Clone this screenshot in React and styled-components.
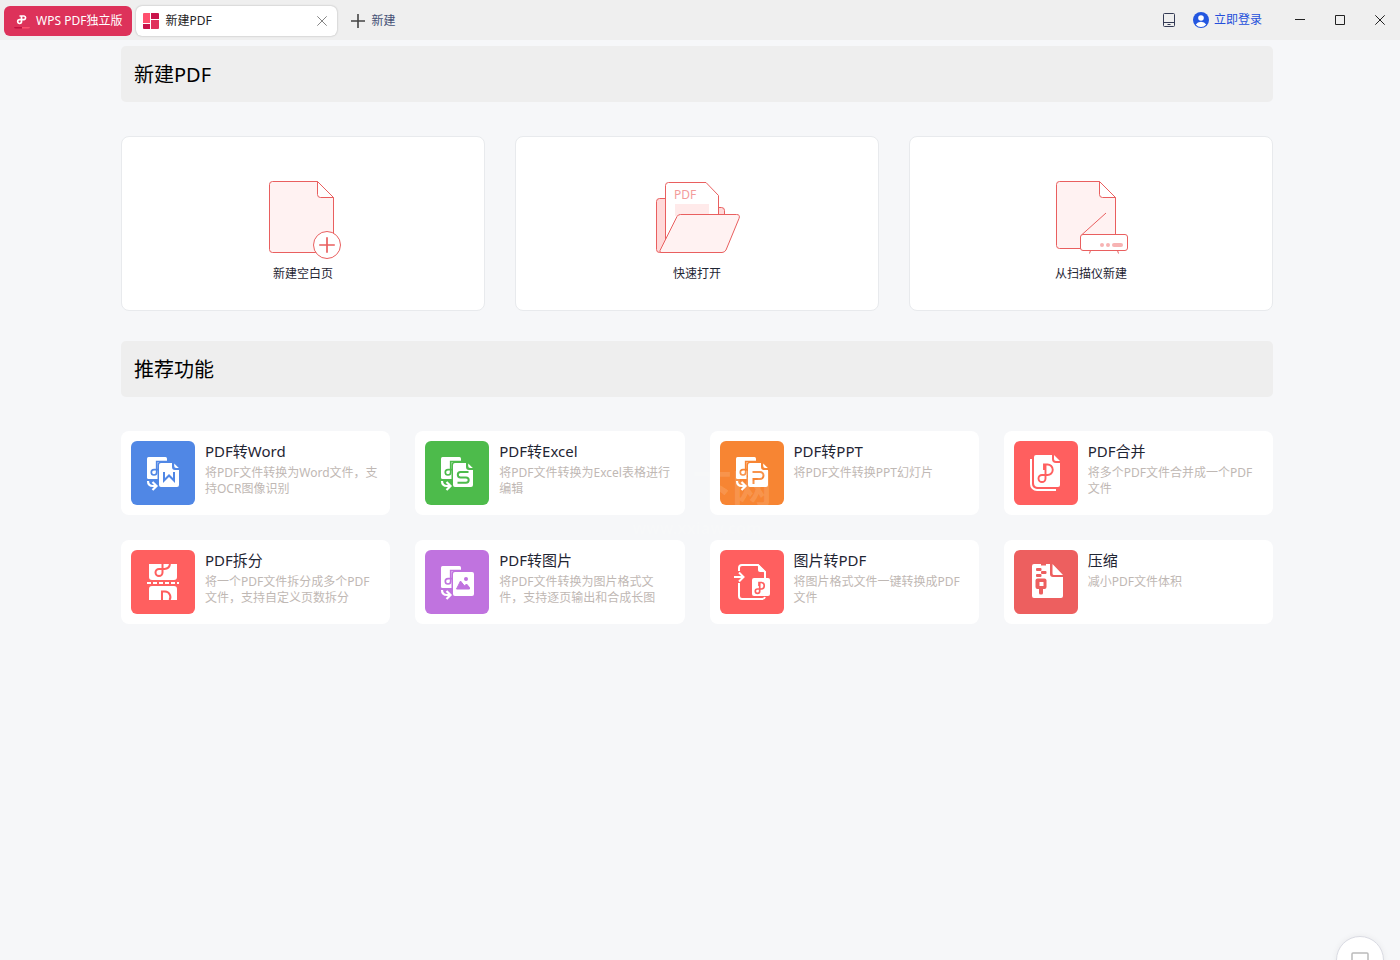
import React from 'react';
import styled, { createGlobalStyle } from 'styled-components';

const GlobalStyle = createGlobalStyle`
  * {
    box-sizing: border-box;
  }

  body {
    margin: 0;
    background-color: #f6f7f9;
    color: #1f2533;
    font-family: 'Noto Sans', 'Noto Sans CJK SC', sans-serif;
    font-size: 12px;
    line-height: 16px;
  }

  button {
    padding: 0;
    border: none;
    background: none;
    color: inherit;
    font: inherit;
    cursor: pointer;
  }

  h2, h3, p {
    margin: 0;
    font-weight: 400;
  }

  svg {
    display: block;
    flex: none;
  }
`;

const TitleBar = styled.header`
  display: flex;
  align-items: center;
  height: 40px;
  padding-left: 4px;
  background-color: #efefef;
`;

const Tabs = styled.nav`
  display: flex;
  align-items: center;
  flex: 1;
  gap: 4px;
  padding-top: 2px;
`;

const HomeTab = styled.button`
  display: flex;
  align-items: center;
  gap: 6px;
  height: 30px;
  padding: 0 10px;
  border-radius: 6px;
  background-color: #dd325a;
  color: #ffffff;
  white-space: nowrap;
`;

const ActiveTab = styled.div`
  display: flex;
  align-items: center;
  width: 201px;
  height: 30px;
  padding: 0 10px 0 7px;
  border-radius: 6px;
  background-color: #ffffff;
  box-shadow: 0 0 2px rgba(0, 0, 0, 0.3);

  span {
    flex: 1;
    margin-left: 6px;
    color: #222222;
  }
`;

const NewTab = styled.button`
  display: flex;
  align-items: center;
  gap: 6px;
  padding: 0 10px;
  color: #444f75;
`;

const Actions = styled.div`
  display: flex;
  align-items: center;
`;

const Login = styled.button`
  display: flex;
  align-items: center;
  gap: 5px;
  margin: 0 18px;
  color: #244fdb;
`;

const WindowButton = styled.button`
  display: flex;
  align-items: center;
  justify-content: center;
  width: 40px;
  height: 40px;
`;

const Page = styled.main`
  max-width: 1158px;
  margin: 0 auto;
  padding: 6px 6px 0 0;
`;

const SectionTitle = styled.h2`
  padding: 15px 13px 13px;
  border-radius: 5px;
  background-color: #eeeeee;
  color: #000000;
  font-size: 20px;
  line-height: 28px;
`;

const Starters = styled.div`
  display: grid;
  grid-template-columns: repeat(3, 1fr);
  gap: 30px;
  margin: 34px 0 30px;
`;

const Starter = styled.button`
  display: flex;
  flex-direction: column;
  align-items: center;
  gap: 1px;
  padding: 32px 0 28px;
  border: 1px solid #e8eaed;
  border-radius: 8px;
  background-color: #ffffff;
`;

const Features = styled.div`
  position: relative;
  display: grid;
  grid-template-columns: repeat(4, 1fr);
  gap: 25px;
  margin-top: 34px;
`;

const FeatureCard = styled.button`
  display: flex;
  align-items: flex-start;
  gap: 10px;
  padding: 10px;
  border-radius: 8px;
  background-color: #ffffff;
  text-align: left;

  h3 {
    margin-bottom: 4px;
    font-size: 15px;
    line-height: 20px;
  }

  p {
    color: #bfb8b4;
  }
`;

const Tile = styled.span`
  flex: none;
  border-radius: 6px;
  background-color: ${({ $color }) => $color};
  color: ${({ $color }) => $color};
`;

const Watermark = styled.div`
  position: absolute;
  top: 28px;
  left: 50%;
  width: 150px;
  transform: translateX(-50%);
  color: rgba(255, 255, 255, 0.14);
  font-size: 40px;
  font-weight: 700;
  line-height: 58px;
  text-align: right;
  pointer-events: none;

  small {
    display: block;
    font-size: 16px;
    line-height: 22px;
    text-align: center;
  }
`;

const FloatButton = styled.button`
  position: fixed;
  right: 16px;
  bottom: -24px;
  display: flex;
  justify-content: center;
  width: 48px;
  height: 48px;
  padding-top: 15px;
  border: 1px solid #d9dae2;
  border-radius: 50%;
  background-color: #ffffff;
  box-shadow: 0 0 6px rgba(0, 0, 0, 0.06);
`;

const Logo = () => (
  <svg width="16" height="16" viewBox="0 0 16 16" fill="none">
    <path d="M0 14h8v1.500H2a2 2 0 0 1-2-1.500z" fill="#c2103f" />
    <path d="M8 14h8a2 2 0 0 1-2 1.500H8z" fill="#ff4f6e" />
    <path
      d="M7.500 3v5.600a1.900 1.900 0 1 1-1.900-1.900h4.500a1.900 1.900 0 0 0 0-3.700H5.500"
      stroke="#ffffff"
      strokeWidth="1.7"
    />
  </svg>
);

const TabIcon = () => (
  <svg width="16" height="16" viewBox="0 0 16 16">
    <path d="M1 0h6v10H0V1a1 1 0 0 1 1-1z" fill="#ff4f6e" />
    <path d="M8 0h7a1 1 0 0 1 1 1v5H8z" fill="#c9134a" />
    <path d="M0 11h7v5H1a1 1 0 0 1-1-1z" fill="#c9134a" />
    <path d="M8 7h8v8a1 1 0 0 1-1 1H8z" fill="#e0315c" />
  </svg>
);

const Cross = ({ size, color }) => (
  <svg width={size} height={size} viewBox="0 0 10 10" stroke={color}>
    <path d="M0.3 0.3l9.4 9.4M9.7 0.3L0.3 9.7" />
  </svg>
);

const BlankPageIcon = () => (
  <svg width="96" height="96" viewBox="0 0 96 96" fill="#fff2f2" stroke="#e95f5f">
    <path d="M17.5 12.5h45l16 16v55h-61a3 3 0 0 1-3-3v-65a3 3 0 0 1 3-3z" />
    <path d="M62.5 12.5v13a3 3 0 0 0 3 3h13z" fill="#ffffff" />
    <circle cx="72" cy="76" r="13.5" fill="#ffffff" />
    <path d="M72 68.2v15.6M64.2 76h15.6" strokeWidth="1.7" />
  </svg>
);

const FolderIcon = () => (
  <svg width="96" height="96" viewBox="0 0 96 96" fill="#ffd9d9" stroke="#e95f5f">
    <path d="M10.5 29.5h6v9h56a3 3 0 0 1 3 3v30l-64 12h-1a3 3 0 0 1-3-3v-48a3 3 0 0 1 3-3z" />
    <path d="M16.5 71V16.5a3 3 0 0 1 3-3H57l12.5 13V60z" fill="#ffffff" />
    <path d="M26 35h34v12H26z" fill="#ffeaea" stroke="none" />
    <text x="25" y="30" fontSize="12" fill="#f39b9b" stroke="none">
      PDF
    </text>
    <path
      d="M31.5 45.5h56q4 0 2.5 4L77 81q-1.5 2.5-4 2.5H12q-1.5 0-1-2l17-34q1-2 3.5-2z"
      fill="#fff2f2"
    />
  </svg>
);

const ScannerIcon = () => (
  <svg width="96" height="96" viewBox="0 0 96 96" fill="#fff2f2" stroke="#e95f5f">
    <path d="M16.5 12.5h40l16 16v51h-56a3 3 0 0 1-3-3v-61a3 3 0 0 1 3-3z" />
    <path d="M56.5 12.5v13a3 3 0 0 0 3 3h13z" fill="#ffffff" />
    <path d="M38.5 66L63 44" />
    <path d="M47.5 81.5l-1 3M74.5 81.5l1 3" />
    <rect x="37.5" y="65.5" width="47" height="16" rx="2.5" fill="#ffffff" />
    <g fill="#f7b3b3" stroke="none">
      <circle cx="59" cy="76" r="2" />
      <circle cx="65" cy="76" r="2" />
      <rect x="69" y="74" width="11" height="4" rx="2" />
    </g>
  </svg>
);

// Back page and arrow shared by the "convert to" icons
const ConvertBase = ({ children, fold = true }) => (
  <>
    <path d="M17.5 16h17q1.500 0 1.500 1.500V38H17.500q-1.500 0-1.500-1.500v-19q0-1.500 1.500-1.500z" fill="#ffffff" />
    <path
      d="M36 20.500H25.700v10.800a2.700 2.700 0 1 1-2.700-2.700h5"
      stroke="currentColor"
      strokeWidth="1.7"
    />
    {fold ? (
      <>
        <path
          d="M30 22h11v4a3 3 0 0 0 3 3h4v15a2 2 0 0 1-2 2H30a2 2 0 0 1-2-2V24a2 2 0 0 1 2-2z"
          fill="#ffffff"
          stroke="currentColor"
          strokeWidth="3"
          paintOrder="stroke"
        />
        <path d="M43.2 22.500l4.600 4.500h-2.600a2 2 0 0 1-2-2z" fill="#ffffff" />
      </>
    ) : (
      <rect
        x="28"
        y="22"
        width="21"
        height="24"
        rx="2"
        fill="#ffffff"
        stroke="currentColor"
        strokeWidth="3"
        paintOrder="stroke"
      />
    )}
    <path d="M17 40q0 5 5 5h3M21.500 41l4 4-4 4" stroke="#ffffff" strokeWidth="2.200" />
    {children}
  </>
);

const WordIcon = () => (
  <ConvertBase>
    <path d="M33 31v8.500l5-5 5 5V31" stroke="currentColor" strokeWidth="2" />
  </ConvertBase>
);

const ExcelIcon = () => (
  <ConvertBase>
    <path
      d="M43.500 31H35.500a2.700 2.700 0 0 0 0 5.400h5.500a2.700 2.700 0 0 1 0 5.400h-8.500"
      stroke="currentColor"
      strokeWidth="2"
    />
  </ConvertBase>
);

const SlidesIcon = () => (
  <ConvertBase>
    <path
      d="M32.500 31h7.500a3.500 3.500 0 0 1 0 7h-6.500v5"
      stroke="currentColor"
      strokeWidth="2"
    />
  </ConvertBase>
);

const PictureIcon = () => (
  <ConvertBase fold={false}>
    <path
      d="M31.500 39l4-8 4 5 2-2 3 3.500V39z"
      fill="currentColor"
      stroke="currentColor"
      strokeLinejoin="round"
    />
    <circle cx="41" cy="29" r="2" fill="currentColor" />
  </ConvertBase>
);

const MergeIcon = () => (
  <>
    <path d="M17 18v25a6 6 0 0 0 6 6h19" stroke="#ffffff" strokeWidth="2" />
    <path
      d="M22 14h16v4a4 4 0 0 0 4 4h4v22a2 2 0 0 1-2 2H24a4 4 0 0 1-4-4V16a2 2 0 0 1 2-2z"
      fill="#ffffff"
    />
    <path d="M40 14l6 6h-4a2 2 0 0 1-2-2z" fill="#ffffff" />
    <path
      d="M30 29v-5.500h3.500a5.200 5.200 0 0 1 0 10.500H28a3.500 3.500 0 1 0 3.500 3.500V24"
      stroke="currentColor"
      strokeWidth="1.900"
    />
  </>
);

const SplitIcon = () => (
  <>
    <path d="M18 14h28v13a3 3 0 0 1-3 3H21a3 3 0 0 1-3-3z" fill="#ffffff" />
    <path
      d="M31.500 14v8.500a3.500 3.500 0 1 1-3.500-3.500h5.500a6 6 0 0 0 5.500-5"
      stroke="currentColor"
      strokeWidth="2"
    />
    <path d="M16 33h32" stroke="#ffffff" strokeWidth="2" strokeDasharray="4 2" />
    <path d="M21 36h22a3 3 0 0 1 3 3v11H18V39a3 3 0 0 1 3-3z" fill="#ffffff" />
    <path d="M31 50v-8.500h3a5.500 5.500 0 0 1 4.500 8.500" stroke="currentColor" strokeWidth="2" />
  </>
);

const ToPdfIcon = () => (
  <>
    <path
      d="M19 21v-3a3 3 0 0 1 3-3h16l7 7v6M19 33v13a3 3 0 0 0 3 3h20a3 3 0 0 0 3-2"
      stroke="#ffffff"
      strokeWidth="2"
    />
    <path d="M38 14l8 8h-6a2 2 0 0 1-2-2z" fill="#ffffff" />
    <path d="M14 27h9M19 22.500l4.500 4.500-4.500 4.500" stroke="#ffffff" strokeWidth="2" />
    <rect x="32" y="28" width="18" height="18" rx="2" fill="#ffffff" />
    <path
      d="M39 36v-3.500h2.500a3.300 3.300 0 0 1 0 6.500H37.500a2.200 2.200 0 1 0 2.200 2.200V33"
      stroke="currentColor"
      strokeWidth="1.700"
    />
  </>
);

const CompressIcon = () => (
  <>
    <path
      d="M20 14h16v10a3 3 0 0 0 3 3h10v19a2 2 0 0 1-2 2H20a2 2 0 0 1-2-2V16a2 2 0 0 1 2-2z"
      fill="#ffffff"
    />
    <path d="M38.500 14L49 25h-9a1.500 1.500 0 0 1-1.500-1.500z" fill="#ffffff" />
    <g fill="currentColor">
      <path d="M27 14h5v1.500h-5z" />
      <rect x="22" y="18" width="5.500" height="3" rx="1" />
      <rect x="27" y="21" width="5.500" height="3" rx="1" />
      <rect x="22" y="24" width="5.500" height="3" rx="1" />
      <rect x="21.500" y="28.500" width="11" height="10.500" rx="2" />
      <rect x="25" y="37" width="4" height="7.500" rx="1.500" />
    </g>
    <path d="M25.500 32h4v4h-4z" fill="#ffffff" />
  </>
);

const starters = [
  { label: '新建空白页', Icon: BlankPageIcon },
  { label: '快速打开', Icon: FolderIcon },
  { label: '从扫描仪新建', Icon: ScannerIcon },
];

const features = [
  {
    title: 'PDF转Word',
    text: '将PDF文件转换为Word文件，支持OCR图像识别',
    color: '#5087e5',
    Icon: WordIcon,
  },
  {
    title: 'PDF转Excel',
    text: '将PDF文件转换为Excel表格进行编辑',
    color: '#4dbb4b',
    Icon: ExcelIcon,
  },
  { title: 'PDF转PPT', text: '将PDF文件转换PPT幻灯片', color: '#f78533', Icon: SlidesIcon },
  { title: 'PDF合并', text: '将多个PDF文件合并成一个PDF文件', color: '#ff5f5f', Icon: MergeIcon },
  {
    title: 'PDF拆分',
    text: '将一个PDF文件拆分成多个PDF文件，支持自定义页数拆分',
    color: '#ff5f5f',
    Icon: SplitIcon,
  },
  {
    title: 'PDF转图片',
    text: '将PDF文件转换为图片格式文件，支持逐页输出和合成长图',
    color: '#c073df',
    Icon: PictureIcon,
  },
  {
    title: '图片转PDF',
    text: '将图片格式文件一键转换成PDF文件',
    color: '#ff5f5f',
    Icon: ToPdfIcon,
  },
  { title: '压缩', text: '减小PDF文件体积', color: '#ed5f5f', Icon: CompressIcon },
];

const App = () => {
  return (
    <>
      <GlobalStyle />
      <TitleBar>
        <Tabs>
          <HomeTab>
            <Logo />
            WPS PDF独立版
          </HomeTab>
          <ActiveTab>
            <TabIcon />
            <span>新建PDF</span>
            <button aria-label="关闭标签">
              <Cross size={10} color="#858585" />
            </button>
          </ActiveTab>
          <NewTab>
            <svg width="14" height="14" viewBox="0 0 14 14" stroke="#444444" strokeWidth="1.6">
              <path d="M7 0v14M0 7h14" />
            </svg>
            新建
          </NewTab>
        </Tabs>
        <Actions>
          <button aria-label="设备">
            <svg width="12" height="14" viewBox="0 0 12 14" fill="none" stroke="#343b55">
              <rect x="0.5" y="0.5" width="11" height="13" rx="1" />
              <path d="M0.5 9.5h11M4.500 11.500h3" />
            </svg>
          </button>
          <Login>
            <svg width="16" height="16" viewBox="0 0 16 16" fill="#ffffff">
              <circle cx="8" cy="8" r="8" fill="#2457e0" />
              <circle cx="8" cy="6" r="2.8" />
              <path d="M2.800 12.500Q4.500 9.800 8 9.800t5.200 2.700Q11.200 15 8 15t-5.200-2.500z" />
            </svg>
            立即登录
          </Login>
          <WindowButton aria-label="最小化">
            <svg width="10" height="10" viewBox="0 0 10 10" stroke="#222222">
              <path d="M0 4.500h10" />
            </svg>
          </WindowButton>
          <WindowButton aria-label="最大化">
            <svg width="10" height="10" viewBox="0 0 10 10" fill="none" stroke="#222222">
              <path d="M0.5 0.5h9v9h-9z" />
            </svg>
          </WindowButton>
          <WindowButton aria-label="关闭">
            <Cross size={10} color="#222222" />
          </WindowButton>
        </Actions>
      </TitleBar>
      <Page>
        <SectionTitle>新建PDF</SectionTitle>
        <Starters>
          {starters.map(({ label, Icon }) => (
            <Starter key={label}>
              <Icon />
              {label}
            </Starter>
          ))}
        </Starters>
        <SectionTitle>推荐功能</SectionTitle>
        <Features>
          {features.map(({ title, text, color, Icon }) => (
            <FeatureCard key={title}>
              <Tile $color={color}>
                <svg width="64" height="64" viewBox="0 0 64 64" fill="none">
                  <Icon />
                </svg>
              </Tile>
              <div>
                <h3>{title}</h3>
                <p>{text}</p>
              </div>
            </FeatureCard>
          ))}
          <Watermark aria-hidden="true">
            下网
            <small>www.xxiaw.com</small>
          </Watermark>
        </Features>
      </Page>
      <FloatButton aria-label="反馈">
        <svg width="18" height="18" viewBox="0 0 18 18" fill="none" stroke="#bbbbbb" strokeWidth="1.5">
          <rect x="1" y="1" width="16" height="15" rx="1" />
        </svg>
      </FloatButton>
    </>
  );
};

export default App;
